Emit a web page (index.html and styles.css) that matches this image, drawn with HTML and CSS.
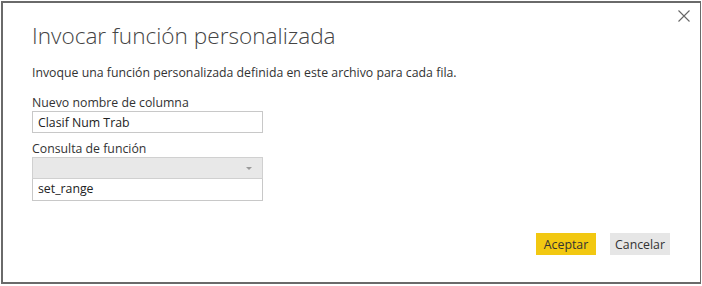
FILE: index.html
```html
<!DOCTYPE html>
<html lang="es">
<head>
    <meta charset="UTF-8">
    <title>Invocar función personalizada</title>
    <link rel="stylesheet" href="styles.css">
</head>
<body>
    <div class="dialog">
        <button class="close" aria-label="Cerrar">
            <svg width="12" height="12" viewBox="0 0 12 12">
                <path d="M0.5 0.5 L11.5 11.5 M11.5 0.5 L0.5 11.5" stroke="#666" stroke-width="1.1" fill="none"/>
            </svg>
        </button>

        <h1>Invocar función personalizada</h1>
        <p class="intro">Invoque una función personalizada definida en este archivo para cada fila.</p>

        <div class="field">
            <label for="colName">Nuevo nombre de columna</label>
            <input type="text" id="colName" class="text-input" value="Clasif Num Trab">
        </div>

        <div class="field">
            <label>Consulta de función</label>
            <div class="select">
                <span class="arrow"></span>
            </div>
            <div class="option">set_range</div>
        </div>

        <div class="buttons">
            <button class="btn primary">Aceptar</button>
            <button class="btn">Cancelar</button>
        </div>
    </div>
</body>
</html>
```

FILE: styles.css
```css
html, body {
    margin: 0;
    padding: 0;
    background: #fff;
}
body {
    font-family: "Open Sans", "Noto Sans", sans-serif;
    color: #333;
    padding: 1px;
}
.dialog {
    position: relative;
    width: 700px;
    height: 283px;
    box-sizing: border-box;
    border: 2px solid #6a6a6a;
    border-right-width: 1px;
    background: #fff;
    padding: 17px 30px 0 29px;
}
.close {
    position: absolute;
    top: 6px;
    right: 9px;
    width: 14px;
    height: 14px;
    padding: 0;
    border: none;
    background: none;
    display: flex;
    align-items: center;
    justify-content: center;
}
h1 {
    margin: 0;
    font-weight: 300;
    font-size: 22.6px;
    line-height: 32px;
    color: #444;
}
.intro {
    margin: 12px 0 0 0;
    font-size: 12.3px;
    line-height: 17px;
    color: #333;
}
.field {
    margin-top: 7px;
    width: 231px;
}
.field:first-of-type {
    margin-top: 13px;
}
label {
    display: block;
    font-size: 12.3px;
    line-height: 17px;
    color: #333;
    margin-bottom: 0;
}
.text-input {
    display: block;
    width: 100%;
    height: 22px;
    box-sizing: border-box;
    border: 1px solid #c8c8c8;
    padding: 0 5px;
    margin: 0;
    font-family: inherit;
    font-size: 12.3px;
    color: #222;
    outline: none;
}
.select {
    position: relative;
    height: 22px;
    box-sizing: border-box;
    border: 1px solid #d0d0d0;
    background: #e8e8e8;
}
.arrow {
    position: absolute;
    right: 10px;
    top: 9px;
    border-left: 3px solid transparent;
    border-right: 3px solid transparent;
    border-top: 3px solid #9a9a9a;
}
.option {
    height: 22px;
    box-sizing: border-box;
    border: 1px solid #c8c8c8;
    border-top: none;
    padding: 0 5px;
    font-size: 12.3px;
    line-height: 20px;
    color: #222;
}
.buttons {
    display: flex;
    justify-content: flex-end;
    gap: 14px;
    margin-top: 32px;
}
.btn {
    width: 60px;
    height: 22px;
    border: none;
    padding: 0;
    font-family: inherit;
    font-size: 12.3px;
    color: #333;
    background: #e6e6e6;
}
.btn.primary {
    background: #f2c811;
}
```
